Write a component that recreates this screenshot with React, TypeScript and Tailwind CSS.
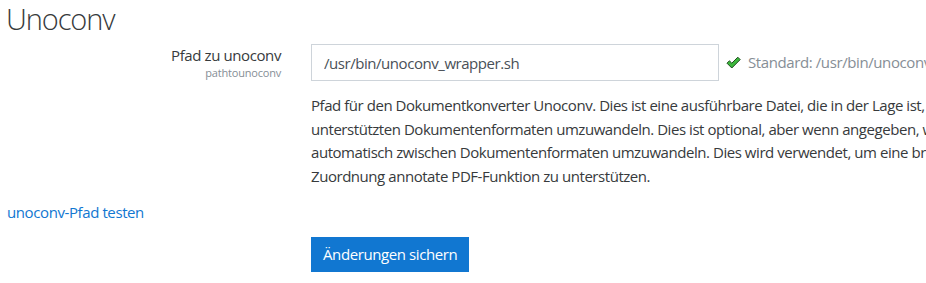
import { useState } from "react";

const descLines = [
  "Pfad für den Dokumentkonverter Unoconv. Dies ist eine ausführbare Datei, die in der Lage ist, zwischen den",
  "unterstützten Dokumentenformaten umzuwandeln. Dies ist optional, aber wenn angegeben, wird Moodle es verwenden, um",
  "automatisch zwischen Dokumentenformaten umzuwandeln. Dies wird verwendet, um eine breitere Palette von Eingabedateien für die",
  "Zuordnung annotate PDF-Funktion zu unterstützen.",
];

function CheckIcon() {
  return (
    <svg width="15" height="13" viewBox="0 0 15 13" className="shrink-0">
      <path
        d="M1 7.2 L3.4 4.8 L5.8 7.2 L11.8 1.2 L14.2 3.6 L5.8 12 Z"
        fill="#3cb83c"
        stroke="#1d4d1d"
        strokeWidth="1"
        strokeLinejoin="round"
      />
    </svg>
  );
}

export default function App() {
  const [path, setPath] = useState("/usr/bin/unoconv_wrapper.sh");

  return (
    <div
      className="w-[926px] h-[283px] overflow-hidden bg-white text-[15px] tracking-[-0.4px] text-[#373a3c]"
      style={{ fontFamily: '"Open Sans", sans-serif' }}
    >
      <h2 className="pl-[6px] pt-[1px] text-[29px] font-light leading-[36px] tracking-[-1.1px] text-[#373a3c]">
        Unoconv
      </h2>

      <div className="mt-[7px] flex">
        <div className="w-[281px] shrink-0 pt-[1px] text-right">
          <div className="leading-[20px]">Pfad zu unoconv</div>
          <div className="text-[11px] leading-[16px] tracking-[-0.2px] text-[#868e96]">pathtounoconv</div>
        </div>
        <div className="ml-[30px] min-w-0 flex-1">
          <div className="flex items-center">
            <input
              value={path}
              onChange={(e) => setPath(e.target.value)}
              className="h-[37px] w-[408px] shrink-0 border border-[#ced4da] px-[12px] text-[15px] tracking-[-0.45px] text-[#495057] outline-none"
            />
            <div className="ml-[7px] flex items-center gap-[7px] whitespace-nowrap text-[#868e96]">
              <CheckIcon />
              <span>Standard: /usr/bin/unoconv</span>
            </div>
          </div>
          <div className="mt-[13px] leading-[23.5px] tracking-[-0.45px]">
            {descLines.map((line) => (
              <div key={line} className="whitespace-nowrap">
                {line}
              </div>
            ))}
          </div>
        </div>
      </div>

      <div className="mt-[13px] pl-[7px] leading-[22px]">
        <a href="#" className="text-[#1177d1] hover:underline">
          unoconv-Pfad testen
        </a>
      </div>

      <div className="mt-[14px] pl-[311px]">
        <button className="h-[35px] bg-[#1177d1] px-[12px] text-[15px] text-white">
          Änderungen sichern
        </button>
      </div>
    </div>
  );
}
